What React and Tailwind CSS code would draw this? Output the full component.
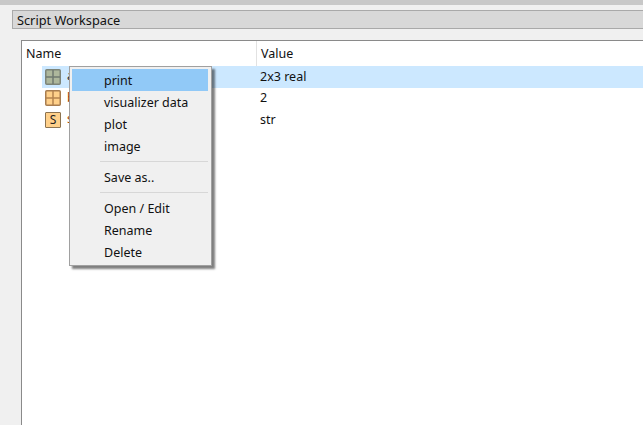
function GridIcon({ fill, line, edge }) {
  return (
    <svg width="16" height="16" viewBox="0 0 16 16" className="shrink-0">
      <rect x="0.75" y="0.75" width="14.5" height="14.5" rx="1" fill={fill} stroke={edge} strokeWidth="1.5" />
      <path d="M8 1V15M1 8H15" stroke={line} strokeWidth="1.5" fill="none" />
    </svg>
  )
}

function StrIcon() {
  return (
    <div className="w-[16px] h-[16px] shrink-0 bg-[#ffd08a] border-[1.5px] border-[#8c7350] rounded-[1px] flex items-center justify-center text-[12px] leading-none text-[#222]">
      S
    </div>
  )
}

const rows = [
  { name: "a", value: "2x3 real", icon: <GridIcon fill="#adb79c" line="#6f7a70" edge="#7d8478" />, nameColor: "text-[#222]", selected: true },
  { name: "b", value: "2", icon: <GridIcon fill="#ffd08a" line="#b5834f" edge="#a87d50" />, nameColor: "text-[#a04000]" },
  { name: "s", value: "str", icon: <StrIcon />, nameColor: "text-[#a04000]" },
]

function MenuItem({ label, active }) {
  return (
    <div className={`h-[22px] pl-[32px] pt-[2px] flex items-center ${active ? "bg-[#91c9f7]" : ""}`}>{label}</div>
  )
}

function Divider() {
  return <div className="h-px bg-[#d7d7d7] ml-[28px] my-[4px]"></div>
}

function ContextMenu() {
  return (
    <div className="absolute left-[69px] top-[66px] w-[143px] h-[200px] bg-[#f0f0f0] border border-[#a0a0a0] pt-[2px] pl-[2px] pr-[3px] shadow-[3px_3px_2px_rgba(0,0,0,0.5)] text-[12.5px] text-[#111]">
      <MenuItem label="print" active />
      <MenuItem label="visualizer data" />
      <MenuItem label="plot" />
      <MenuItem label="image" />
      <Divider />
      <MenuItem label="Save as.." />
      <Divider />
      <MenuItem label="Open / Edit" />
      <MenuItem label="Rename" />
      <MenuItem label="Delete" />
    </div>
  )
}

export default function App() {
  return (
    <div className="relative w-[643px] h-[425px] overflow-hidden bg-[#f0f0f0] font-['Noto_Sans',sans-serif] text-[12.5px] text-[#111]">
      <div className="h-[5px] bg-[#c8c8c8]"></div>
      <div className="ml-[12px] mt-[5px] h-[19px] bg-[#d8d8d8] border-y border-l border-[#a9a9a9] pl-[4px] pt-[2px] flex items-center text-[12.75px]">
        Script Workspace
      </div>
      <div className="ml-[21px] mt-[11px] h-[390px] bg-white border-t border-l border-[#8a8a8a]">
        <div className="flex h-[25px] items-center">
          <div className="w-[235px] pl-[4px] pt-[2px] h-full flex items-center border-r border-[#e2e2e2]">Name</div>
          <div className="pl-[4px] pt-[2px]">Value</div>
        </div>
        {rows.map((row) => (
          <div key={row.name} className={`flex h-[21.5px] items-center ml-[20px] ${row.selected ? "bg-[#cce8ff]" : ""}`}>
            <div className="w-[215px] pl-[3px] flex items-center gap-[6px]">
              {row.icon}
              <span className={row.nameColor}>{row.name}</span>
            </div>
            <div className="pl-[3px] pt-[1px]">{row.value}</div>
          </div>
        ))}
      </div>
      <ContextMenu />
    </div>
  )
}
